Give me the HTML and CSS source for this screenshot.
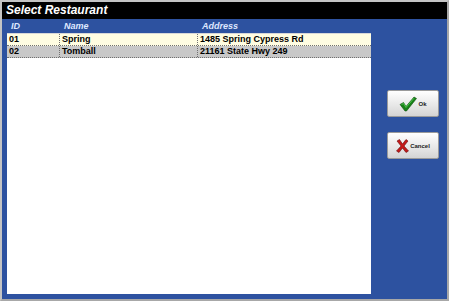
FILE: index.html
```html
<!DOCTYPE html>
<html lang="en">
<head>
    <meta charset="UTF-8">
    <title>Select Restaurant</title>
    <link rel="stylesheet" href="styles.css">
</head>
<body>
    <div class="dialog">
        <div class="title">Select Restaurant</div>
        <div class="content">
            <div class="list">
                <div class="head">
                    <span class="c-id">ID</span>
                    <span class="c-name">Name</span>
                    <span class="c-addr">Address</span>
                </div>
                <div class="rows">
                    <div class="row selected">
                        <span class="c-id">01</span>
                        <span class="c-name">Spring</span>
                        <span class="c-addr">1485 Spring Cypress Rd</span>
                    </div>
                    <div class="row">
                        <span class="c-id">02</span>
                        <span class="c-name">Tomball</span>
                        <span class="c-addr">21161 State Hwy 249</span>
                    </div>
                </div>
            </div>
            <div class="actions">
                <button class="btn">
                    <svg width="18" height="16" viewBox="0 0 18 16">
                        <path d="M1 8.5 L4.5 6.5 L7 10.5 L15 1 L17.5 2.5 L7.5 15 L6 15 Z" fill="#188018" stroke="#0b500b" stroke-width="0.6"/>
                        <path d="M2.5 8.5 L4.5 7.5 L7 11.5 L15 2.2" fill="none" stroke="#4cc44c" stroke-width="1"/>
                    </svg>
                    <span>Ok</span>
                </button>
                <button class="btn">
                    <svg width="13" height="14" viewBox="0 0 13 14">
                        <path d="M1 2 L3.5 0.5 L6.5 5 L10 0.5 L12 2 L8 7 L12.5 12 L10 13.5 L6.5 9 L3 13.5 L0.5 12 L5 7 Z" fill="#c41a1a" stroke="#6a0a0a" stroke-width="0.6"/>
                    </svg>
                    <span>Cancel</span>
                </button>
            </div>
        </div>
    </div>
</body>
</html>
```

FILE: styles.css
```css
* {
    margin: 0;
    padding: 0;
    box-sizing: border-box;
}

body {
    font-family: 'Liberation Sans', Arial, sans-serif;
    background-color: #fff;
}

.dialog {
    width: 449px;
    height: 301px;
    border: 2px solid #c4c4c4;
    border-right-color: #a8a8a8;
    border-bottom-color: #a8a8a8;
    display: flex;
    flex-direction: column;
}

.title {
    height: 17px;
    background: #000;
    color: #fff;
    font-size: 12px;
    font-weight: bold;
    font-style: italic;
    line-height: 17px;
    padding-left: 4px;
}

.content {
    flex: 1;
    background: #2d52a0;
    display: flex;
    padding: 0 0 5px 5px;
}

.list {
    width: 364px;
    display: flex;
    flex-direction: column;
}

.head {
    height: 14px;
    display: flex;
    color: #dfe8ff;
    font-size: 9px;
    font-weight: bold;
    font-style: italic;
    line-height: 14px;
}

.head span {
    padding-left: 4px;
}

.rows {
    flex: 1;
    background: #fff;
    border-top: 1px solid #d8d8d8;
}

.row {
    height: 12px;
    display: flex;
    font-size: 9px;
    font-weight: bold;
    line-height: 11px;
    color: #000;
    background: #c8c8c8;
    border-bottom: 1px dotted #707070;
}

.row.selected {
    background: #fffde2;
}

.row span {
    padding-left: 2px;
    border-right: 1px dotted #707070;
}

.c-id {
    width: 53px;
}

.c-name {
    width: 138px;
}

.c-addr {
    flex: 1;
}

.row .c-addr {
    border-right: none;
}

.actions {
    display: flex;
    flex-direction: column;
    gap: 15px;
    padding: 71px 0 0 16px;
}

.btn {
    width: 52px;
    height: 27px;
    border: 1px solid #9a9a9a;
    border-radius: 2px;
    background: linear-gradient(#ffffff, #e6e6e6 60%, #d4d4d4);
    display: flex;
    align-items: center;
    justify-content: center;
    gap: 1px;
    font-family: 'Liberation Sans', Arial, sans-serif;
    font-size: 6px;
    font-weight: bold;
    color: #222;
}
```
